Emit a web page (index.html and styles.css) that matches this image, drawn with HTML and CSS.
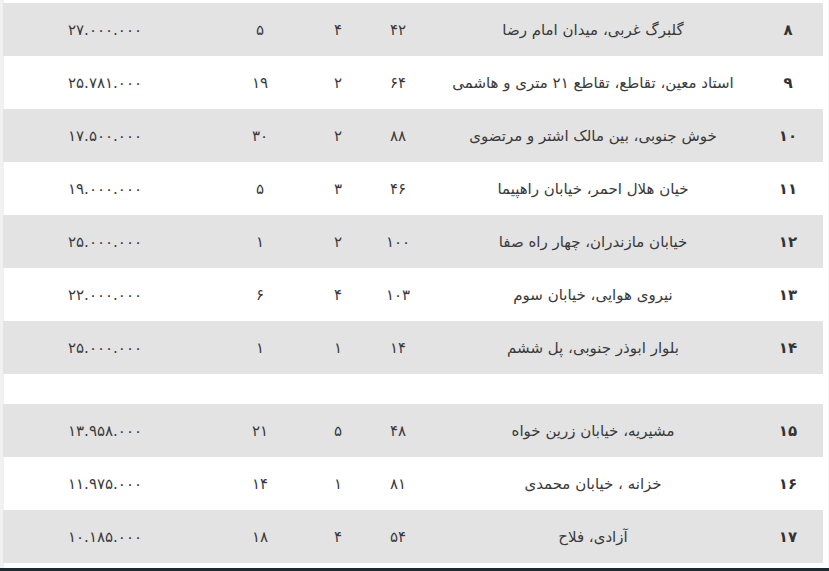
FILE: index.html
```html
<!DOCTYPE html>
<html lang="fa" dir="rtl">
<head>
<meta charset="utf-8">
<title>جدول</title>
<link rel="stylesheet" href="styles.css">
</head>
<body>
<div class="page">
  <div class="frame">
    <table class="grid">
      <colgroup>
        <col class="c-num"><col class="c-addr"><col class="c-a"><col class="c-b"><col class="c-c"><col class="c-price">
      </colgroup>
      <tbody>
        <tr class="shade"><td class="num">۸</td><td>گلبرگ غربی، میدان امام رضا</td><td>۴۲</td><td>۴</td><td>۵</td><td>۲۷.۰۰۰.۰۰۰</td></tr>
        <tr><td class="num">۹</td><td>استاد معین، تقاطع، تقاطع ۲۱ متری و هاشمی</td><td>۶۴</td><td>۲</td><td>۱۹</td><td>۲۵.۷۸۱.۰۰۰</td></tr>
        <tr class="shade"><td class="num">۱۰</td><td>خوش جنوبی، بین مالک اشتر و مرتضوی</td><td>۸۸</td><td>۲</td><td>۳۰</td><td>۱۷.۵۰۰.۰۰۰</td></tr>
        <tr><td class="num">۱۱</td><td>خیان هلال احمر، خیابان راهپیما</td><td>۴۶</td><td>۳</td><td>۵</td><td>۱۹.۰۰۰.۰۰۰</td></tr>
        <tr class="shade"><td class="num">۱۲</td><td>خیابان مازندران، چهار راه صفا</td><td>۱۰۰</td><td>۲</td><td>۱</td><td>۲۵.۰۰۰.۰۰۰</td></tr>
        <tr><td class="num">۱۳</td><td>نیروی هوایی، خیابان سوم</td><td>۱۰۳</td><td>۴</td><td>۶</td><td>۲۲.۰۰۰.۰۰۰</td></tr>
        <tr class="shade"><td class="num">۱۴</td><td>بلوار ابوذر جنوبی، پل ششم</td><td>۱۴</td><td>۱</td><td>۱</td><td>۲۵.۰۰۰.۰۰۰</td></tr>
        <tr class="gap"><td></td><td></td><td></td><td></td><td></td><td></td></tr>
        <tr class="shade"><td class="num">۱۵</td><td>مشیریه، خیابان زرین خواه</td><td>۴۸</td><td>۵</td><td>۲۱</td><td>۱۳.۹۵۸.۰۰۰</td></tr>
        <tr><td class="num">۱۶</td><td>خزانه ، خیابان محمدی</td><td>۸۱</td><td>۱</td><td>۱۴</td><td>۱۱.۹۷۵.۰۰۰</td></tr>
        <tr class="shade"><td class="num">۱۷</td><td>آزادی، فلاح</td><td>۵۴</td><td>۴</td><td>۱۸</td><td>۱۰.۱۸۵.۰۰۰</td></tr>
      </tbody>
    </table>
  </div>
  <div class="bottom-bar"></div>
</div>
</body>
</html>
```
FILE: styles.css
```css
html, body {
  margin: 0;
  padding: 0;
  background: #ffffff;
}
body {
  font-family: "DejaVu Sans", "Noto Sans", sans-serif;
  color: #3a3a3a;
  width: 829px;
  height: 571px;
  overflow: hidden;
}
.page {
  display: flex;
  flex-direction: column;
  height: 571px;
}
.frame {
  padding: 3px 5px 0 4px;
  border-left: 4px solid #f1f1f1;
  border-right: 1px solid #f6f6f6;
  flex: 1;
}
.grid {
  width: 820px;
  border-collapse: collapse;
  table-layout: fixed;
  direction: rtl;
}
.c-num { width: 70px; }
.c-addr { width: 320px; }
.c-a { width: 70px; }
.c-b { width: 50px; }
.c-c { width: 106px; }
.c-price { width: 204px; }
.grid td {
  height: 53px;
  padding: 0;
  text-align: center;
  vertical-align: middle;
  font-size: 15px;
  line-height: 20px;
  white-space: nowrap;
}
.grid tr.shade td {
  background: #e3e3e3;
}
.grid tr.gap td {
  height: 30px;
}
.grid td.num {
  font-weight: bold;
  color: #333333;
}
.bottom-bar {
  height: 3px;
  background: #1c2a31;
  flex: none;
}
```
